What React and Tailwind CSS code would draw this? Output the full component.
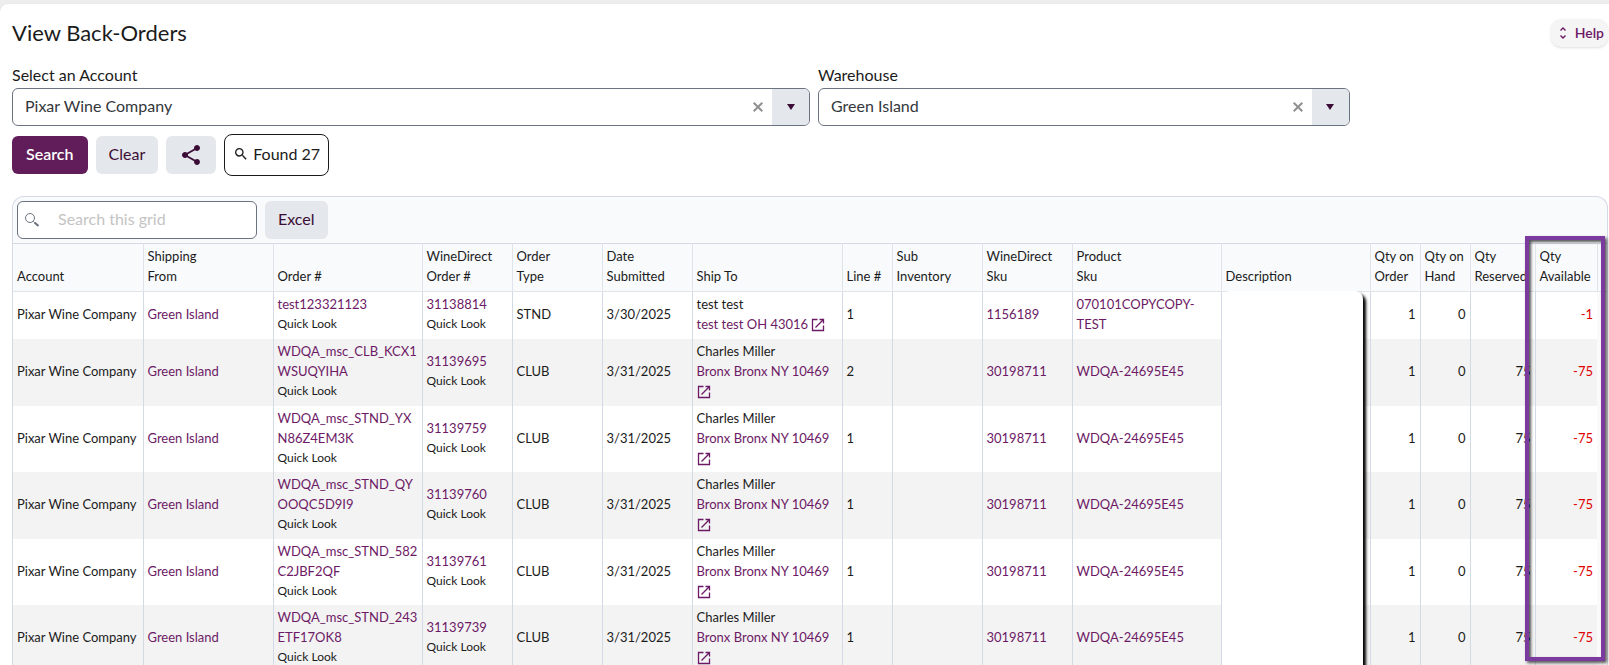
import React from 'react';
import clsx from 'clsx';

const COLUMNS = [
  { label: ['Account'], width: 'w-[130px]' },
  { label: ['Shipping', 'From'], width: 'w-[130px]' },
  { label: ['Order #'], width: 'w-[149px]' },
  { label: ['WineDirect', 'Order #'], width: 'w-[90px]' },
  { label: ['Order', 'Type'], width: 'w-[90px]' },
  { label: ['Date', 'Submitted'], width: 'w-[90px]' },
  { label: ['Ship To'], width: 'w-[150px]' },
  { label: ['Line #'], width: 'w-[50px]' },
  { label: ['Sub', 'Inventory'], width: 'w-[90px]' },
  { label: ['WineDirect', 'Sku'], width: 'w-[90px]' },
  { label: ['Product', 'Sku'], width: 'w-[149px]' },
  { label: ['Description'], width: '' },
  { label: ['Qty on', 'Order'], width: 'w-[50px]' },
  { label: ['Qty on', 'Hand'], width: 'w-[50px]' },
  { label: ['Qty', 'Reserved'], width: 'w-[65px]' },
  { label: ['Qty', 'Available'], width: 'w-[62px]' },
];

const CHARLES = {
  type: 'CLUB',
  date: '3/31/2025',
  name: 'Charles Miller',
  address: 'Bronx Bronx NY 10469',
  line: 1,
  wdSku: '30198711',
  sku: ['WDQA-24695E45'],
  reserved: 75,
  available: -75,
};

const ROWS = [
  {
    order: ['test123321123'],
    wdOrder: '31138814',
    type: 'STND',
    date: '3/30/2025',
    name: 'test test',
    address: 'test test OH 43016',
    line: 1,
    wdSku: '1156189',
    sku: ['070101COPYCOPY-', 'TEST'],
    reserved: null,
    available: -1,
  },
  { ...CHARLES, order: ['WDQA_msc_CLB_KCX1', 'WSUQYIHA'], wdOrder: '31139695', line: 2 },
  { ...CHARLES, order: ['WDQA_msc_STND_YX', 'N86Z4EM3K'], wdOrder: '31139759' },
  { ...CHARLES, order: ['WDQA_msc_STND_QY', 'OOQC5D9I9'], wdOrder: '31139760' },
  { ...CHARLES, order: ['WDQA_msc_STND_582', 'C2JBF2QF'], wdOrder: '31139761' },
  { ...CHARLES, order: ['WDQA_msc_STND_243', 'ETF17OK8'], wdOrder: '31139739' },
];

function SearchIcon({ className }) {
  return (
    <svg viewBox="0 0 24 24" fill="currentColor" className={className} aria-hidden="true">
      <path d="M15.5 14h-.79l-.28-.27A6.47 6.47 0 0 0 16 9.5 6.5 6.5 0 1 0 9.5 16c1.61 0 3.09-.59 4.23-1.57l.27.28v.79l5 4.99L20.49 19l-4.99-5zm-6 0C7.01 14 5 11.99 5 9.5S7.01 5 9.5 5 14 7.01 14 9.5 11.99 14 9.5 14z" />
    </svg>
  );
}

function GridSearchIcon() {
  return (
    <svg viewBox="0 0 16 16" fill="none" stroke="currentColor" className="size-4 shrink-0" aria-hidden="true">
      <circle cx="6" cy="6" r="4.5" />
      <path d="M9.3 9.3l1.4 1.4" />
      <path d="M10.5 10.5l4 3.6" strokeWidth="2" />
    </svg>
  );
}

function ShareIcon() {
  return (
    <svg viewBox="0 0 24 24" fill="currentColor" className="size-6" aria-hidden="true">
      <path d="M18 16.08c-.76 0-1.44.3-1.96.77L8.91 12.7c.05-.23.09-.46.09-.7s-.04-.47-.09-.7l7.05-4.11c.54.5 1.25.81 2.04.81 1.66 0 3-1.34 3-3s-1.34-3-3-3-3 1.34-3 3c0 .24.04.47.09.7L8.04 9.81C7.5 9.31 6.79 9 6 9c-1.66 0-3 1.34-3 3s1.34 3 3 3c.79 0 1.5-.31 2.04-.81l7.12 4.16c-.05.21-.08.43-.08.65 0 1.61 1.31 2.92 2.92 2.92s2.92-1.31 2.92-2.92-1.31-2.92-2.92-2.92z" />
    </svg>
  );
}

function OpenIcon() {
  return (
    <svg
      viewBox="0 0 14 14"
      fill="none"
      stroke="currentColor"
      strokeWidth="1.3"
      className="inline-block size-3.5 align-[-3px]"
      aria-hidden="true"
    >
      <path d="M6.5 1.5h-5v11h11v-5" />
      <path d="M8.5 1.5h4v4M12.5 1.5l-8 8" />
    </svg>
  );
}

function Lines({ parts }) {
  return parts.map((part, i) => (
    <React.Fragment key={part}>
      {i > 0 && <br />}
      {part}
    </React.Fragment>
  ));
}

function ComboBox({ id, label, value, className }) {
  return (
    <div className={className}>
      <label htmlFor={id} className="mb-px block text-base leading-6 text-[#1b1b1b]">
        {label}
      </label>
      <div className="flex h-[38px] items-stretch overflow-hidden rounded-md border border-[#6b7280] bg-white">
        <input
          id={id}
          defaultValue={value}
          className="min-w-0 flex-1 pb-0.5 pl-3 text-base text-[#33373b] outline-none"
        />
        <button type="button" aria-label={`Clear ${label}`} className="flex w-7 items-center justify-center text-[#8f8f8f]">
          <svg viewBox="0 0 10 10" stroke="currentColor" strokeWidth="2" className="size-2.5" aria-hidden="true">
            <path d="M.7.7l8.6 8.6M9.3.7L.7 9.3" />
          </svg>
        </button>
        <button
          type="button"
          aria-label={`Open ${label}`}
          className="flex w-[37px] items-center justify-center bg-[#e4e7ec] text-[#3b0d36]"
        >
          <svg viewBox="0 0 8 6" fill="currentColor" className="h-1.5 w-2" aria-hidden="true">
            <path d="M0 0h8L4 6z" />
          </svg>
        </button>
      </div>
    </div>
  );
}

function Cell({ className, children }) {
  return (
    <td className={clsx('border-r border-[#d3d9e5] px-1 pt-0.5 pb-1 whitespace-nowrap', className)}>{children}</td>
  );
}

function BackOrderRow({ row, first }) {
  return (
    <tr className="h-[47px] bg-white even:h-[67px] even:bg-[#f3f3f3]">
      <Cell>Pixar Wine Company</Cell>
      <Cell>
        <a href="#warehouse" className="text-[#6d1a66]">Green Island</a>
      </Cell>
      <Cell>
        <a href="#order" className="text-[#6d1a66]">
          <Lines parts={row.order} />
        </a>
        <a href="#quick-look" className="block text-xs leading-5">Quick Look</a>
      </Cell>
      <Cell>
        <a href="#wd-order" className="text-[#6d1a66]">{row.wdOrder}</a>
        <a href="#quick-look" className="block text-xs leading-5">Quick Look</a>
      </Cell>
      <Cell>{row.type}</Cell>
      <Cell>{row.date}</Cell>
      <Cell className="whitespace-normal">
        {row.name}
        <br />
        <a href="#address" className="text-[#6d1a66]">
          {row.address}
          {!first && <br />} <OpenIcon />
        </a>
      </Cell>
      <Cell>{row.line}</Cell>
      <Cell />
      <Cell>
        <a href="#wd-sku" className="text-[#6d1a66]">{row.wdSku}</a>
      </Cell>
      <Cell>
        <a href="#sku" className="text-[#6d1a66]">
          <Lines parts={row.sku} />
        </a>
      </Cell>
      <Cell className={clsx(first && 'relative')}>
        {first && (
          <div className="absolute -top-px left-0 h-[480px] w-[141px] rounded-t-lg bg-white shadow-[3px_3px_3px_#000]" />
        )}
      </Cell>
      <Cell className="text-right">1</Cell>
      <Cell className="text-right">0</Cell>
      <Cell className="text-right">{row.reserved}</Cell>
      <Cell className="border-r-0 text-right text-[#e00000]">{row.available}</Cell>
      <td className="bg-[#fafafa]" />
    </tr>
  );
}

function BackOrderGrid() {
  return (
    <section className="relative mt-5 rounded-t-xl border border-b-0 border-[#d3d9e5] bg-slate-50">
      <div className="flex gap-2 p-1">
        <div className="flex h-[38px] w-60 items-center gap-[18px] rounded-md border border-[#6b7280] bg-white px-1.5 text-[#6b7280]">
          <GridSearchIcon />
          <input
            type="search"
            aria-label="Search this grid"
            placeholder="Search this grid"
            className="min-w-0 flex-1 pb-0.5 text-base outline-none placeholder:text-[#c4c4c4]"
          />
        </div>
        <button type="button" className="h-[38px] rounded-md bg-[#e4e7ec] px-[13px] pb-0.5 text-base text-[#3b0d36]">
          Excel
        </button>
      </div>
      <table className="w-full table-fixed border-collapse border-t border-[#d3d9e5] text-[13px] leading-5 text-[#1b1b1b]">
        <thead>
          <tr className="border-b border-[#dfe3ea]">
            {COLUMNS.map(({ label, width }) => (
              <th
                key={label.join(' ')}
                scope="col"
                className={clsx(
                  'border-r border-[#dfe3ea] px-1 pt-0.5 pb-[5px] text-left align-bottom font-normal whitespace-nowrap',
                  width,
                )}
              >
                <Lines parts={label} />
              </th>
            ))}
            <td className="w-[10px]" />
          </tr>
        </thead>
        <tbody>
          {ROWS.map((row, i) => (
            <BackOrderRow key={row.wdOrder} row={row} first={i === 0} />
          ))}
        </tbody>
      </table>
      {/* highlight around the availability column */}
      <div className="pointer-events-none absolute top-[39px] right-0.5 h-[425px] w-20 border-4 border-[#7a3a9e] shadow-[2px_2px_3px_#000a,inset_2px_2px_3px_#000a]" />
    </section>
  );
}

export default function App() {
  return (
    <div className="h-screen overflow-hidden bg-[#ededed] pt-1 font-['Lato','Liberation_Sans',sans-serif]">
      <main className="min-h-full rounded-tl-lg bg-white pt-[15px] pr-px pl-3 shadow-sm">
        <header className="flex h-7 items-center justify-between">
          <h1 className="text-[22px] leading-7 text-[#1b1b1b]">View Back-Orders</h1>
          <button
            type="button"
            className="flex h-7 items-center gap-2 rounded-[10px] bg-[#f5f5f5] pr-1 pl-2 text-sm font-semibold text-[#6d1a66] shadow-sm"
          >
            <svg
              viewBox="0 0 8 12"
              fill="none"
              stroke="currentColor"
              strokeWidth="1.4"
              className="h-3 w-2"
              aria-hidden="true"
            >
              <path d="M1.5 3.5L4 1l2.5 2.5M1.5 8.5L4 11l2.5-2.5" />
            </svg>
            Help
          </button>
        </header>
        <div className="mt-4 flex gap-2">
          <ComboBox id="account" label="Select an Account" value="Pixar Wine Company" className="w-1/2" />
          <ComboBox id="warehouse" label="Warehouse" value="Green Island" className="w-1/3" />
        </div>
        <div className="mt-2 flex items-center gap-2 text-base">
          <button type="button" className="h-[38px] rounded-md bg-[#611d5a] px-3.5 pb-0.5 font-semibold text-white">
            Search
          </button>
          <button type="button" className="h-[38px] rounded-md bg-[#e4e7ec] px-[13px] pb-0.5 text-[#3b0d36]">
            Clear
          </button>
          <button
            type="button"
            aria-label="Share"
            className="flex h-[38px] w-[50px] items-center justify-center rounded-md bg-[#e4e7ec] text-[#3b0d36]"
          >
            <ShareIcon />
          </button>
          <output className="flex h-[42px] items-center gap-1 rounded-lg border border-[#1b1b1b] px-2 pb-0.5 text-[#1b1b1b]">
            <SearchIcon className="size-4" />
            Found 27
          </output>
        </div>
        <BackOrderGrid />
      </main>
    </div>
  );
}
